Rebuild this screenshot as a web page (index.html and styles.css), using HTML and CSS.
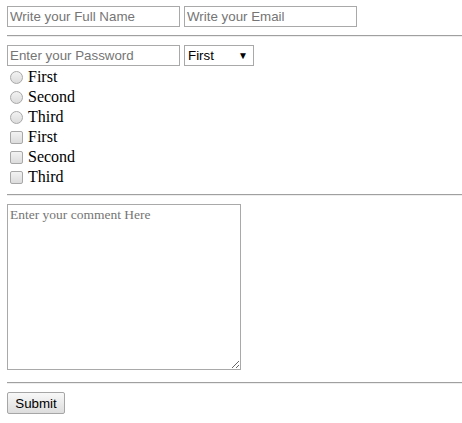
FILE: index.html
```html
<!DOCTYPE html>
<html>
<head>
<meta charset="utf-8">
<link rel="stylesheet" href="styles.css">
</head>
<body>
<form class="form">
  <div class="row">
    <input class="text" type="text" placeholder="Write your Full Name">
    <input class="text" type="email" placeholder="Write your Email">
  </div>
  <hr class="rule">
  <div class="row">
    <input class="text" type="password" placeholder="Enter your Password">
    <div class="select"><span>First</span><span class="arrow">▼</span></div>
  </div>
  <div class="choices">
    <label class="choice"><span class="radio"></span>First</label>
    <label class="choice"><span class="radio"></span>Second</label>
    <label class="choice"><span class="radio"></span>Third</label>
    <label class="choice"><span class="check"></span>First</label>
    <label class="choice"><span class="check"></span>Second</label>
    <label class="choice"><span class="check"></span>Third</label>
  </div>
  <hr class="rule">
  <div class="area-line">
    <textarea class="area" placeholder="Enter your comment Here"></textarea>
  </div>
  <hr class="rule">
  <div class="row">
    <button class="btn" type="button">Submit</button>
  </div>
</form>
</body>
</html>
```
FILE: styles.css
```css
html, body {
  margin: 0;
  padding: 0;
  background: #fff;
}
body {
  font-family: "Liberation Serif", "Times New Roman", serif;
  font-size: 16px;
  color: #000;
}
.form {
  padding: 6px 0 0 7px;
  display: flex;
  flex-direction: column;
}
.row {
  display: flex;
  gap: 4px;
  align-items: flex-start;
}
.text {
  box-sizing: border-box;
  width: 173px;
  height: 21px;
  margin: 0;
  padding: 1px 2px;
  border: 1px solid #a9a9a9;
  font-family: "Liberation Sans", Arial, sans-serif;
  font-size: 13.33px;
  color: #000;
  outline: none;
  background: #fff;
}
.text::placeholder {
  color: #757575;
}
.rule {
  margin: 8px 0;
  height: 0;
  border: 0;
  border-top: 1px solid #a0a0a0;
  border-bottom: 1px solid #eeeeee;
}
.select {
  box-sizing: border-box;
  width: 70px;
  height: 21px;
  border: 1px solid #a9a9a9;
  display: flex;
  align-items: center;
  justify-content: space-between;
  padding: 0 5px 0 3px;
  font-family: "Liberation Sans", Arial, sans-serif;
  font-size: 13.33px;
  color: #000;
  background: #fff;
}
.arrow {
  font-size: 10px;
}
.choices {
  display: flex;
  flex-direction: column;
}
.choice {
  box-sizing: border-box;
  height: 20px;
  padding-top: 2px;
  display: flex;
  align-items: center;
  line-height: 18px;
}
.radio, .check {
  box-sizing: border-box;
  width: 13px;
  height: 13px;
  margin: 0 5px 0 3px;
  border: 1px solid #a8a8a8;
  background: linear-gradient(#f2f2f2, #dcdcdc);
}
.radio {
  border-radius: 50%;
}
.check {
  border-radius: 2px;
}
.area-line {
  height: 170px;
}
.area {
  display: block;
  box-sizing: border-box;
  width: 234px;
  height: 166px;
  margin: 0;
  padding: 2px;
  border: 1px solid #a9a9a9;
  font-family: "Liberation Serif", "Times New Roman", serif;
  font-size: 13.5px;
  resize: both;
  outline: none;
}
.area::placeholder {
  color: #757575;
}
.btn {
  box-sizing: border-box;
  width: 58px;
  height: 22px;
  margin: 0;
  padding: 0;
  border: 1px solid #a6a6a6;
  border-radius: 2px;
  background: linear-gradient(#f8f8f8, #dddddd);
  font-family: "Liberation Sans", Arial, sans-serif;
  font-size: 13.33px;
  color: #000;
}
```
